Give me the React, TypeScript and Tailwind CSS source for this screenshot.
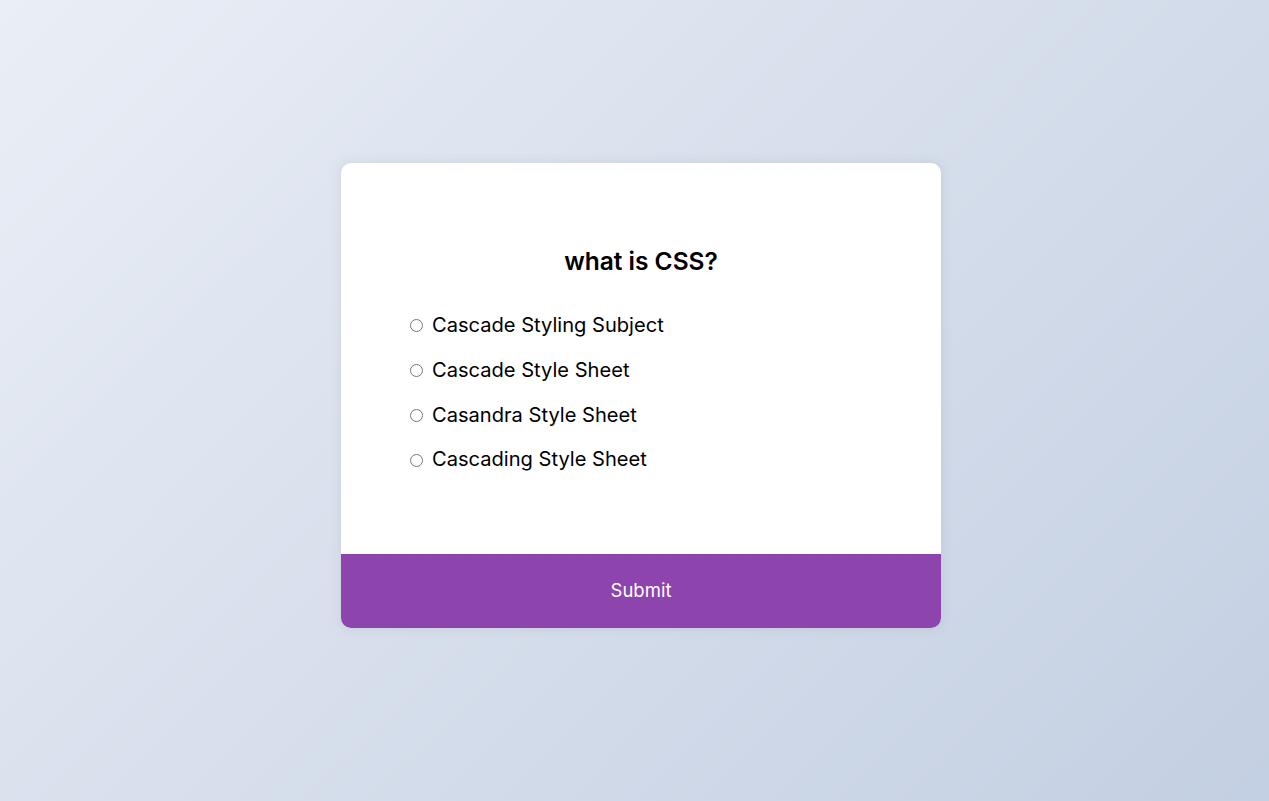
import React from "react";

const options = [
  "Cascade Styling Subject",
  "Cascade Style Sheet",
  "Casandra Style Sheet",
  "Cascading Style Sheet",
];

export default function App() {
  return (
    <div
      className="min-h-screen w-full flex items-center justify-center bg-[linear-gradient(135deg,#eaeef6_0%,#c3cfe2_100%)] text-black"
      style={{ fontFamily: "Inter, 'Open Sans', sans-serif" }}
    >
      <div className="w-[600px] bg-white rounded-[10px] overflow-hidden shadow-[0_0_10px_2px_rgba(100,100,100,0.1)] -mt-[10px] ml-[13px]">
        <div className="p-16">
          <h2 className="text-center text-[24.5px] leading-[36px] font-semibold py-4 m-0">
            what is CSS?
          </h2>
          <ul className="list-none p-0 m-0">
            {options.map((o, i) => (
              <li key={i} className="my-4 flex items-center text-[20.1px] leading-[28.8px]">
                <input
                  type="radio"
                  name="answer"
                  id={`a${i}`}
                  className="ml-[5px] mr-[9px] w-[13px] h-[13px] mt-[1px] accent-gray-600"
                />
                <label htmlFor={`a${i}`} className="cursor-pointer">
                  {o}
                </label>
              </li>
            ))}
          </ul>
        </div>
        <button className="block w-full h-[74px] bg-[#8e44ad] text-white text-[18.5px] border-0 cursor-pointer">
          Submit
        </button>
      </div>
    </div>
  );
}
